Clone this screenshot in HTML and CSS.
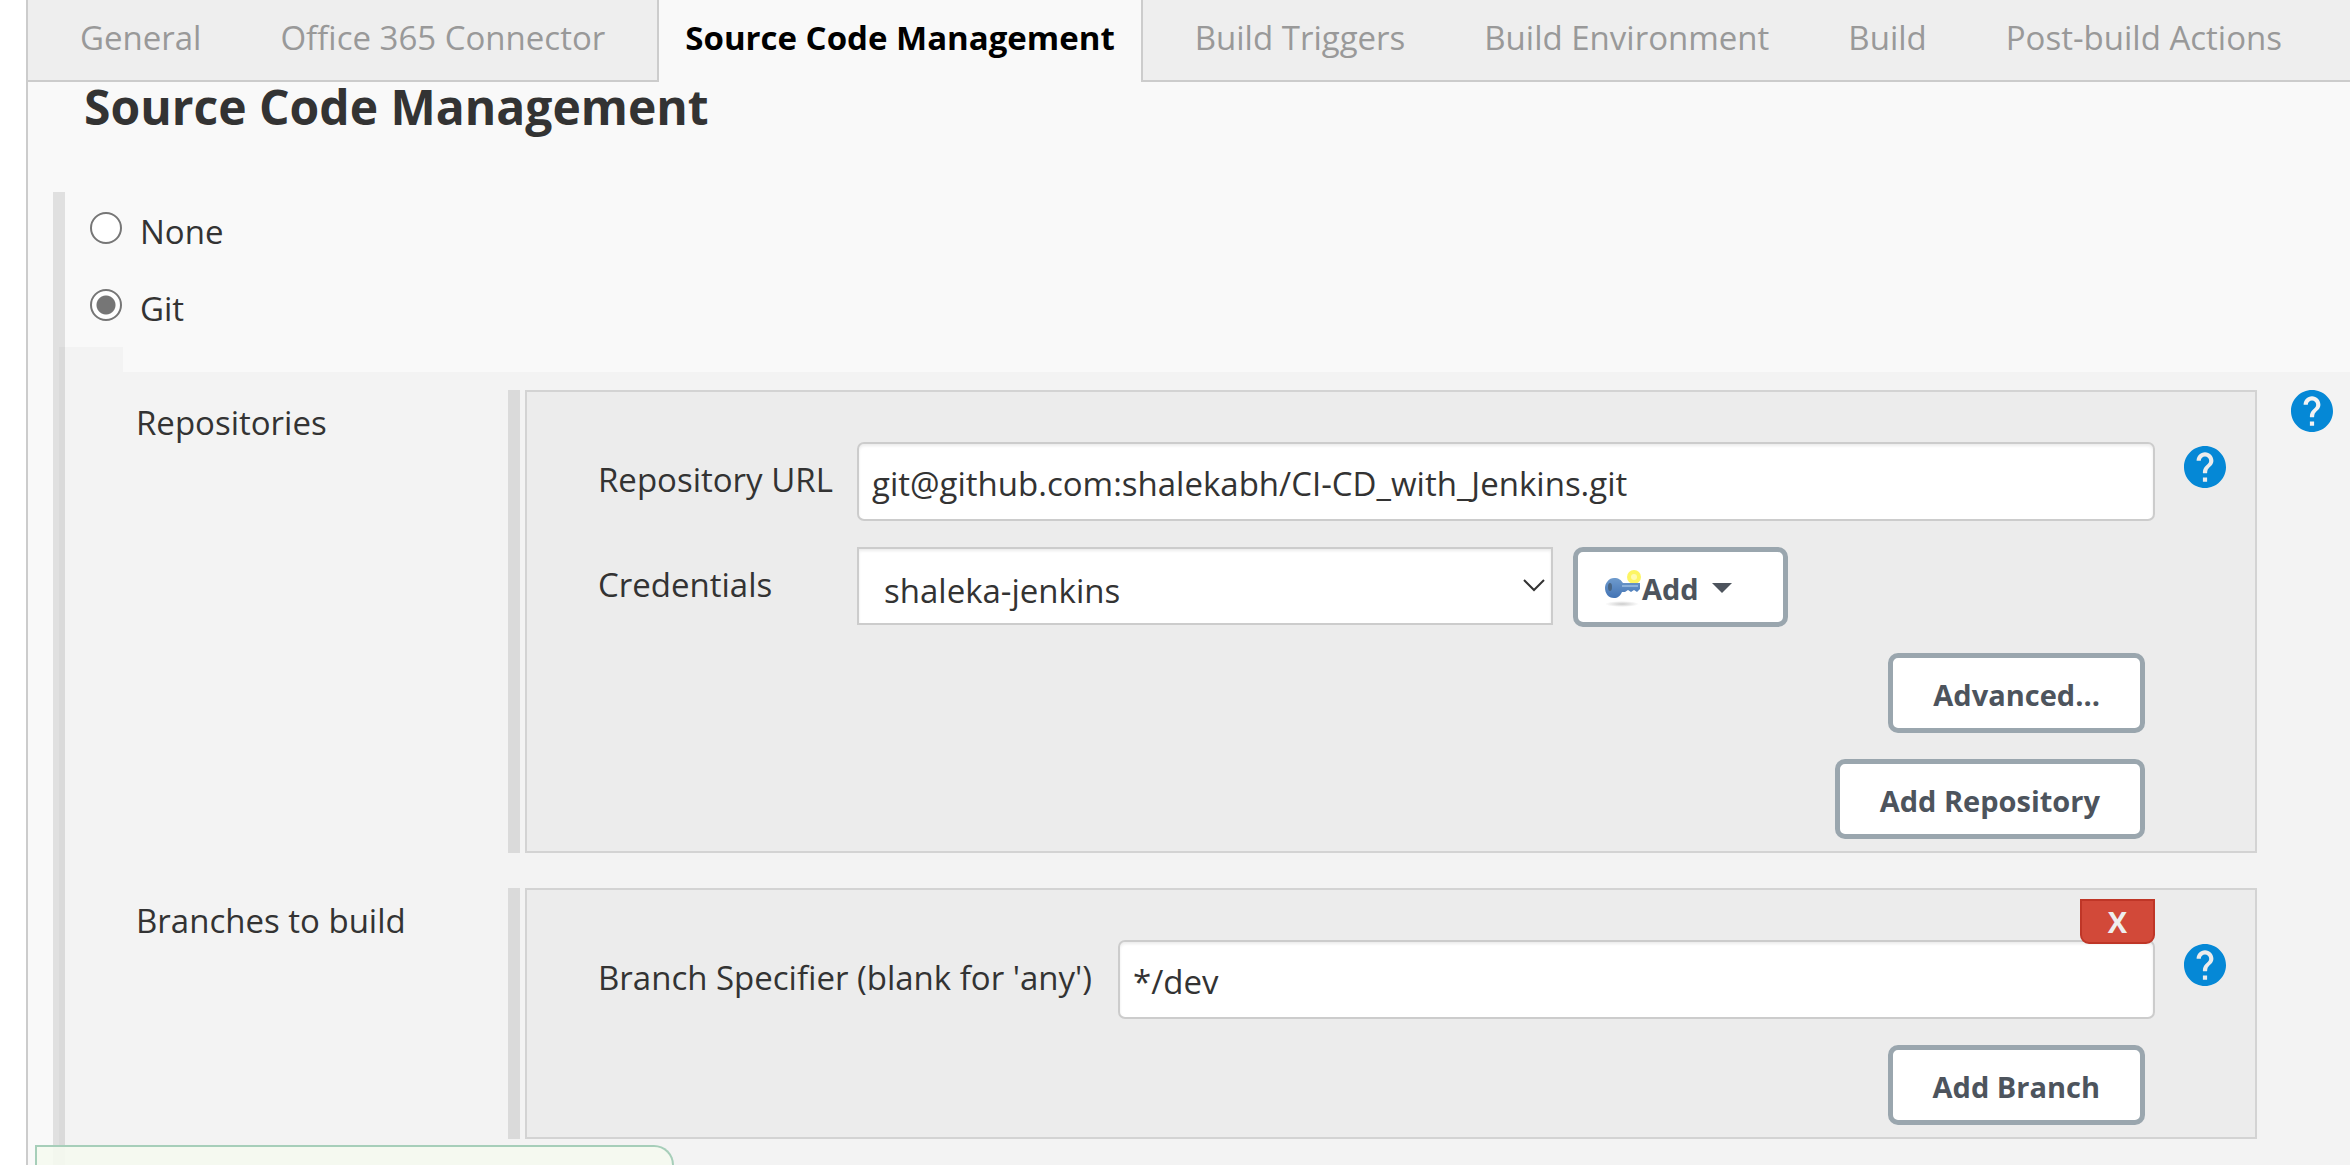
FILE: index.html
```html
<!DOCTYPE html>
<html lang="en">
<head>
<meta charset="utf-8">
<title>Source Code Management</title>
<link rel="stylesheet" href="styles.css">
</head>
<body>
<svg class="sprite" aria-hidden="true">
  <symbol id="help" viewBox="2 2 20 20">
    <path fill="#0588d6" d="M12 2C6.48 2 2 6.48 2 12s4.48 10 10 10 10-4.480 10-10S17.520 2 12 2zm1 17h-2v-2h2v2zm2.070-7.750-.9.920C13.450 12.900 13 13.500 13 15h-2v-.5c0-1.100.450-2.100 1.170-2.830l1.240-1.260c.370-.360.590-.860.590-1.410 0-1.100-.9-2-2-2s-2 .9-2 2H8c0-2.210 1.790-4 4-4s4 1.790 4 4c0 .880-.360 1.680-.930 2.250z"/>
  </symbol>
</svg>
<main class="config">
  <nav class="tabs">
    <a class="tab" href="#general">General</a>
    <a class="tab" href="#office">Office 365 Connector</a>
    <a class="tab tab-active" href="#scm">Source Code Management</a>
    <a class="tab" href="#triggers">Build Triggers</a>
    <a class="tab" href="#environment">Build Environment</a>
    <a class="tab" href="#build">Build</a>
    <a class="tab" href="#post">Post-build Actions</a>
  </nav>
  <h1 class="title" id="scm">Source Code Management</h1>
  <div class="scm">
    <div class="choices">
      <label class="choice"><input class="radio" type="radio" name="scm">None</label>
      <label class="choice"><input class="radio" type="radio" name="scm" checked>Git</label>
    </div>
    <div class="notch"></div>
    <div class="git">
      <section class="entry">
        <h2 class="entry-name">Repositories</h2>
        <div class="panel">
          <div class="row">
            <label class="label" for="url">Repository URL</label>
            <input class="text" id="url" type="text" value="git@github.com:shalekabh/CI-CD_with_Jenkins.git">
            <button class="help" type="button" aria-label="Help"><svg class="help-icon"><use href="#help"/></svg></button>
          </div>
          <div class="row">
            <label class="label" for="credentials">Credentials</label>
            <div class="select-wrap">
              <select class="select" id="credentials"><option>shaleka-jenkins</option></select>
              <svg class="chevron" viewBox="0 0 22 13"><path d="M1 1l10 10L21 1" fill="none" stroke="#333" stroke-width="2"/></svg>
            </div>
            <button class="button button-add" type="button">
              <svg class="key" viewBox="0 0 38 38">
                <defs>
                  <linearGradient id="blue" x1="0" y1="0" x2="0" y2="1"><stop offset="0" stop-color="#6f9bcd"/><stop offset="1" stop-color="#4273b4"/></linearGradient>
                  <radialGradient id="shade"><stop offset="0" stop-color="#ccc"/><stop offset="1" stop-color="#fff"/></radialGradient>
                </defs>
                <ellipse cx="18" cy="35" rx="17" ry="3" fill="url(#shade)"/>
                <circle cx="30" cy="8" r="7" fill="#fdf23c" opacity=".8"/>
                <circle cx="30" cy="8" r="3" fill="#fffbb0"/>
                <path d="M10 9c5 0 7 2 9 5h17v6l-3 3-3-2-3 2-3-2-3 2h-3c-2 4-4 6-8 6-6 0-9-5-9-10s4-10 9-10z" fill="url(#blue)"/>
                <ellipse cx="6" cy="18" rx="2" ry="4" fill="#4a6684"/>
                <path d="M18 17h16" stroke="#8db2db" stroke-width="2"/>
              </svg>
              Add
              <svg class="caret" viewBox="0 0 20 10"><path d="M0 0h20L10 10z" fill="#4d545d"/></svg>
            </button>
          </div>
          <div class="actions"><button class="button" type="button">Advanced...</button></div>
          <div class="actions"><button class="button" type="button">Add Repository</button></div>
        </div>
        <button class="help help-outer" type="button" aria-label="Help"><svg class="help-icon"><use href="#help"/></svg></button>
      </section>
      <section class="entry">
        <h2 class="entry-name">Branches to build</h2>
        <div class="panel">
          <div class="row">
            <label class="label label-wide" for="branch">Branch Specifier (blank for 'any')</label>
            <div class="text-wrap">
              <input class="text" id="branch" type="text" value="*/dev">
              <button class="delete" type="button">X</button>
            </div>
            <button class="help" type="button" aria-label="Help"><svg class="help-icon"><use href="#help"/></svg></button>
          </div>
          <div class="actions"><button class="button" type="button">Add Branch</button></div>
        </div>
      </section>
    </div>
  </div>
</main>
<div class="save-bar"></div>
</body>
</html>
```
FILE: styles.css
```css
* {
  box-sizing: border-box;
}

body {
  margin: 0;
  height: 100vh;
  overflow: hidden;
  background: #fff;
  color: #333;
  font-family: "Open Sans", "Noto Sans", sans-serif;
  font-size: 33px;
}

button,
input,
select {
  margin: 0;
  color: inherit;
  font: inherit;
}

.sprite {
  display: none;
}

.config {
  display: flex;
  flex-direction: column;
  min-height: 100vh;
  margin-left: 26px;
  border-left: 2px solid #ccc;
  background: #f9f9f9;
}

.tabs {
  display: flex;
  gap: 25px;
  padding-left: 25px;
  border-bottom: 2px solid #ccc;
  background: #eee;
}

.tab {
  padding: 0 27px 4px;
  color: #999;
  line-height: 76px;
  text-decoration: none;
  white-space: nowrap;
}

.tab-active {
  margin-bottom: -2px;
  padding: 0 26px 6px;
  border: solid #ccc;
  border-width: 0 2px;
  background: #f9f9f9;
  color: #000;
  font-weight: 700;
}

.title {
  margin: 0 0 60px 56px;
  font-size: 48px;
  line-height: 50px;
}

.scm {
  display: flex;
  flex: 1;
  flex-direction: column;
  margin-left: 25px;
  border-left: 12px solid #e0e0e0;
}

.choices {
  padding: 1px 0 0 25px;
}

.choice {
  display: flex;
  align-items: center;
  gap: 18px;
  line-height: 77px;
}

.radio {
  width: 32px;
  height: 32px;
  margin-bottom: 8px;
  border: 2px solid #767676;
  border-radius: 50%;
  appearance: none;
  background: #fff;
}

.radio:checked {
  background: radial-gradient(circle, #767676 9px, #fff 10px);
}

.notch {
  width: 64px;
  height: 25px;
  margin-left: -6px;
  background: rgba(0, 0, 0, 0.025);
}

.git {
  display: flex;
  flex: 1;
  flex-direction: column;
  gap: 35px;
  margin-left: -6px;
  padding: 18px 17px 25px 77px;
  background: rgba(0, 0, 0, 0.025);
}

.entry {
  display: grid;
  grid-template-columns: 372px 1fr 42px;
}

.entry-name {
  margin: 0;
  font-size: 33px;
  font-weight: 400;
  line-height: 66px;
}

.panel {
  position: relative;
  display: flex;
  flex-direction: column;
  gap: 26px;
  margin: 0 34px 0 17px;
  padding: 50px 29px 12px 71px;
  border: 2px solid #d3d3d3;
  background: #ececec;
}

/* Grab handle beside the panel */
.panel::before {
  position: absolute;
  top: -2px;
  bottom: -2px;
  left: -19px;
  width: 12px;
  background: #dadada;
  content: "";
}

.row {
  display: flex;
  align-items: flex-start;
}

.label {
  flex: 0 0 259px;
  line-height: 76px;
  white-space: nowrap;
}

.label-wide {
  flex-basis: 520px;
}

.text-wrap {
  position: relative;
  display: flex;
  flex: 1;
}

.text,
.select {
  flex: 1;
  min-width: 0;
  border: 2px solid #ccc;
  background: #fff;
  box-shadow: inset 0 2px 3px rgba(0, 0, 0, 0.08);
}

.text {
  height: 79px;
  padding: 4px 13px 0;
  border-radius: 7px;
}

.select-wrap {
  position: relative;
  display: flex;
  flex: 0 1 696px;
  margin-right: 20px;
}

.select {
  height: 78px;
  padding: 8px 25px 0;
  border-radius: 0;
  appearance: none;
}

.chevron {
  position: absolute;
  top: 32px;
  right: 8px;
  width: 22px;
  height: 13px;
  pointer-events: none;
}

.help {
  flex: none;
  width: 42px;
  height: 42px;
  margin: 4px 0 0 29px;
  padding: 0;
  border: 0;
  background: none;
}

.help-outer {
  margin: 0;
}

.help-icon {
  display: block;
  width: 42px;
  height: 42px;
}

.button {
  height: 80px;
  padding: 2px 40px 0;
  border: 5px solid #9aa6ae;
  border-radius: 10px;
  background: #fff;
  color: #4d545d;
  font-size: 29px;
  font-weight: 700;
}

.button-add {
  display: flex;
  align-items: center;
  width: 215px;
  padding: 2px 26px 0;
}

.key {
  width: 38px;
  height: 38px;
}

.caret {
  width: 20px;
  height: 10px;
  margin-left: 13px;
}

.actions {
  display: flex;
  justify-content: flex-end;
  padding-right: 81px;
}

.delete {
  position: absolute;
  top: -41px;
  right: 0;
  width: 75px;
  height: 45px;
  padding: 0;
  border: 2px solid #bf3627;
  border-radius: 0 0 9px 9px;
  background: #d24939;
  color: #eee;
  font-size: 29px;
  font-weight: 700;
}

.save-bar {
  position: fixed;
  bottom: 0;
  left: 35px;
  width: 639px;
  height: 20px;
  border: solid #a6ceb9;
  border-width: 2px 2px 0;
  border-radius: 0 24px 0 0;
  background: rgba(245, 249, 239, 0.9);
}
```
